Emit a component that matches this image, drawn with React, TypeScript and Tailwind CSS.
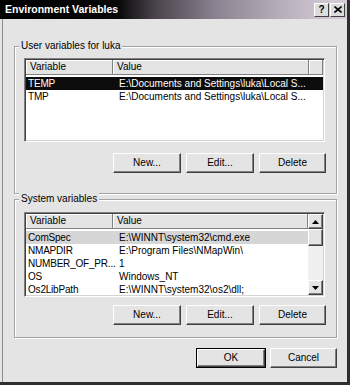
import React from "react";

function Btn({ className, children, def }: { className: string; children: React.ReactNode; def?: boolean }) {
  const inner = (
    <div className="h-full flex items-center justify-center bg-[#e4e4e4] border border-t-white border-l-white border-r-[#404040] border-b-[#404040] shadow-[inset_-1px_-1px_0_#808080] text-[10px] leading-none text-black">
      {children}
    </div>
  );
  return def ? (
    <div className={`${className} h-[20px] border border-black`}>{inner}</div>
  ) : (
    <div className={`${className} h-[20px]`}>{inner}</div>
  );
}

function HeadCell({ className, children }: { className: string; children?: React.ReactNode }) {
  return (
    <div className={`${className} h-[15px] bg-[#e4e4e4] border-r border-b border-[#808080] shadow-[inset_1px_1px_0_#fff] pl-[4px] leading-[14px] text-[10px] text-black whitespace-nowrap overflow-hidden`}>
      {children}
    </div>
  );
}

type Row = { v: string; val: string; sel?: "dark" | "gray" };

function Rows({ rows, w2 }: { rows: Row[]; w2: string }) {
  return (
    <div className="pt-[2px]">
      {rows.map((r) => (
        <div
          key={r.v}
          className={`flex h-[13px] leading-[13px] text-[10px] whitespace-nowrap ${
            r.sel === "dark" ? "bg-[#0c0c0c] text-white" : r.sel === "gray" ? "bg-[#d6d6d6] text-black" : "text-black"
          }`}
        >
          <div className="w-[87px] shrink-0 pl-[2px] tracking-[-0.2px]">{r.v}</div>
          <div className={`${w2} pl-[6px] overflow-hidden`}>{r.val}</div>
        </div>
      ))}
    </div>
  );
}

function Arrow({ up }: { up?: boolean }) {
  return (
    <div className="h-[15px] flex items-center justify-center bg-[#e4e4e4] border border-t-white border-l-white border-r-[#404040] border-b-[#404040] shadow-[inset_-1px_-1px_0_#808080]">
      <svg width="7" height="4" viewBox="0 0 7 4">
        {up ? <polygon points="3.5,0 7,4 0,4" fill="#000" /> : <polygon points="0,0 7,0 3.5,4" fill="#000" />}
      </svg>
    </div>
  );
}

function Group({ label, children, className }: { label: string; children: React.ReactNode; className: string }) {
  return (
    <div className={`${className} relative ml-[14px] w-[323px] border border-[#a4a4a4] shadow-[inset_1px_1px_0_#fff,1px_1px_0_#fff]`}>
      <span className="absolute -top-[7px] left-[4px] px-[2px] bg-[#e4e4e4] text-[10px] leading-[12px] text-black whitespace-nowrap">
        {label}
      </span>
      {children}
    </div>
  );
}

function Buttons() {
  return (
    <div className="flex justify-end gap-[5px] pr-[10px]">
      <Btn className="w-[68px]">New...</Btn>
      <Btn className="w-[68px]">Edit...</Btn>
      <Btn className="w-[67px]">Delete</Btn>
    </div>
  );
}

export default function App() {
  const userRows: Row[] = [
    { v: "TEMP", val: "E:\\Documents and Settings\\luka\\Local S...", sel: "dark" },
    { v: "TMP", val: "E:\\Documents and Settings\\luka\\Local S..." },
  ];
  const sysRows: Row[] = [
    { v: "ComSpec", val: "E:\\WINNT\\system32\\cmd.exe", sel: "gray" },
    { v: "NMAPDIR", val: "E:\\Program Files\\NMapWin\\" },
    { v: "NUMBER_OF_PR...", val: "1" },
    { v: "OS", val: "Windows_NT" },
    { v: "Os2LibPath", val: "E:\\WINNT\\system32\\os2\\dll;" },
  ];
  return (
    <div className="w-[350px] h-[385px] flex flex-col bg-[#e4e4e4] border-r-[3px] border-b-[3px] border-[#2e2e2e] shadow-[inset_2px_0_0_#e4e4e4,inset_3px_0_0_#8c8c8c] font-['Liberation_Sans',Arial,sans-serif] overflow-hidden">
      <div className="h-[19px] shrink-0 flex items-center bg-[linear-gradient(to_right,#000_0%,#080808_34%,#4a444c_45%,#8a8290_62%,#b4acb6_80%,#d4cad6_96%)]">
        <span className="ml-[5px] text-white font-bold text-[10.5px] leading-none whitespace-nowrap">Environment Variables</span>
        <div className="ml-auto mr-[2px] flex gap-[1px]">
          <div className="w-[15px] h-[14px] flex items-center justify-center bg-[#dcdcdc] border border-t-white border-l-white border-r-[#404040] border-b-[#404040] text-[10px] font-bold leading-none text-black">?</div>
          <div className="w-[15px] h-[14px] flex items-center justify-center bg-[#dcdcdc] border border-t-white border-l-white border-r-[#404040] border-b-[#404040]">
            <svg width="8" height="7" viewBox="0 0 8 7">
              <path d="M0.5 0.5 L7.5 6.5 M7.5 0.5 L0.5 6.5" stroke="#000" strokeWidth="1.6" />
            </svg>
          </div>
        </div>
      </div>

      <Group label="User variables for luka" className="mt-[27px] h-[148px]">
        <div className="ml-[9px] mt-[11px] w-[301px] h-[84px] bg-white border border-t-[#808080] border-l-[#808080] border-r-white border-b-white shadow-[inset_1px_1px_0_#404040,inset_-1px_-1px_0_#d4d4d4] p-[1px] overflow-hidden">
          <div className="flex">
            <HeadCell className="w-[87px]">Variable</HeadCell>
            <HeadCell className="w-[196px]">Value</HeadCell>
            <HeadCell className="flex-1" />
          </div>
          <Rows rows={userRows} w2="w-[196px]" />
        </div>
        <div className="mt-[11px]">
          <Buttons />
        </div>
      </Group>

      <Group label="System variables" className="mt-[5px] h-[139px]">
        <div className="ml-[9px] mt-[12px] w-[301px] h-[85px] bg-white border border-t-[#808080] border-l-[#808080] border-r-white border-b-white shadow-[inset_1px_1px_0_#404040,inset_-1px_-1px_0_#d4d4d4] p-[1px] flex overflow-hidden">
          <div className="flex-1 overflow-hidden">
            <div className="flex">
              <HeadCell className="w-[87px]">Variable</HeadCell>
              <HeadCell className="flex-1">Value</HeadCell>
            </div>
            <Rows rows={sysRows} w2="w-[195px]" />
          </div>
          <div className="w-[15px] h-full flex flex-col">
            <Arrow up />
            <div className="h-[17px] bg-[#e4e4e4] border border-t-white border-l-white border-r-[#404040] border-b-[#404040] shadow-[inset_-1px_-1px_0_#808080]" />
            <div className="flex-1 bg-[#f0f0f0]" />
            <Arrow />
          </div>
        </div>
        <div className="mt-[8px]">
          <Buttons />
        </div>
      </Group>

      <div className="mt-[10px] mr-[10px] flex justify-end gap-[4px]">
        <Btn className="w-[70px]" def>OK</Btn>
        <Btn className="w-[67px]">Cancel</Btn>
      </div>
    </div>
  );
}
